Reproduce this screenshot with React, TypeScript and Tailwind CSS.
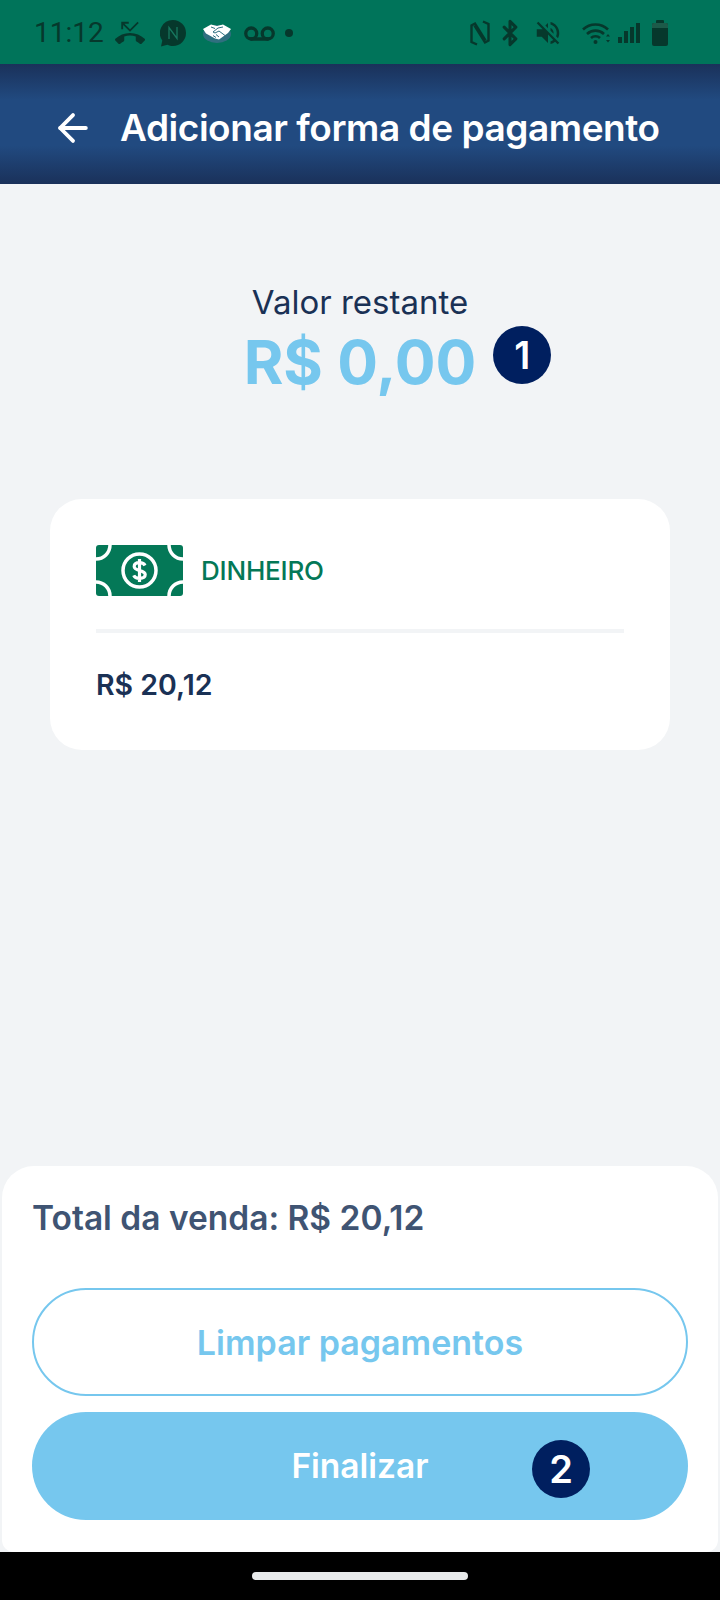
import { ArrowLeft, Bluetooth, Voicemail } from 'lucide-react';

const sans = 'font-["Inter",sans-serif]';

function PhoneMissedIcon() {
  return (
    <svg viewBox="0 0 24 24" className="h-[30px] w-[30px]" fill="#06382c">
      <path d="M6.5 5.5 12 11l7-7-1-1-6 6-4.5-4.5H11V3H5v6h1.5V5.5zm17.21 11.17C20.66 13.78 16.54 12 12 12 7.46 12 3.34 13.78.29 16.67c-.18.18-.29.43-.29.71s.11.53.29.71l2.48 2.48c.18.18.43.29.71.29.27 0 .52-.11.7-.28.79-.74 1.69-1.36 2.66-1.85.33-.16.56-.5.56-.9v-3.1c1.45-.48 3-.73 4.6-.73s3.15.25 4.6.72v3.1c0 .39.23.74.56.9.98.49 1.87 1.12 2.67 1.85.18.18.43.28.7.28.28 0 .53-.11.71-.29l2.48-2.48c.18-.18.29-.43.29-.71s-.11-.53-.29-.71z" />
    </svg>
  );
}

function ChatNIcon() {
  return (
    <svg viewBox="0 0 26 27" className="h-[27px] w-[26px]">
      <path d="M13 0a13 13 0 0 1 0 26c-2 0-4-.5-5.6-1.3L1 26.500l1.300-6A13 13 0 0 1 13 0z" fill="#06382c" />
      <path d="M9 19V7.500l8 11V7" fill="none" stroke="#17785f" strokeWidth="1.300" />
    </svg>
  );
}

function MercadoIcon() {
  return (
    <svg viewBox="0 0 28 20" className="h-[20px] w-[28px]">
      <ellipse cx="14" cy="11" rx="14" ry="9" fill="#2f6f7f" />
      <path d="M0 6 8 1.500l6 1.500 6-1.500L28 6l-3 4-9 6.500-4-1-9-5z" fill="#fff" />
      <path d="M8 4l4 1.500M20 4l-5 1-5 4 2 1 4-2 6 4.500M10 12.500l3 2M13 11.500l3 2.500" fill="none" stroke="#2f6f7f" strokeWidth="1" />
    </svg>
  );
}

function NfcIcon() {
  return (
    <svg viewBox="0 0 20 26" className="h-[26px] w-[20px]" fill="none" stroke="#06382c" strokeWidth="2.400">
      <path d="M7 24.500 1.500 22V5.500L5 3.500l10.500 17" />
      <path d="M13 1.500 18.500 4v16.500L15 22.500 4.500 5.500" />
    </svg>
  );
}

function MuteIcon() {
  return (
    <svg viewBox="0 0 24 24" className="h-[30px] w-[30px]" fill="#06382c">
      <path d="M16.5 12c0-1.770-1.020-3.290-2.500-4.030v2.210l2.450 2.450c.03-.2.05-.41.05-.63zm2.500 0c0 .94-.2 1.820-.54 2.640l1.510 1.510C20.630 14.910 21 13.500 21 12c0-4.280-2.990-7.860-7-8.770v2.060c2.890.86 5 3.540 5 6.710zM4.270 3 3 4.270 7.730 9H3v6h4l5 5v-6.730l4.250 4.250c-.67.52-1.420.93-2.250 1.180v2.060c1.380-.31 2.630-.95 3.690-1.810L19.730 21 21 19.730l-9-9L4.270 3zM12 4 9.910 6.090 12 8.180V4z" />
    </svg>
  );
}

function WifiIcon() {
  return (
    <svg viewBox="0 0 28 24" className="h-[24px] w-[28px]" fill="none" stroke="#06382c" strokeWidth="2.600">
      <path d="M1 8.500a18 18 0 0 1 25 0" />
      <path d="M5 13a12.500 12.500 0 0 1 17 0" />
      <path d="M9 17a6.500 6.500 0 0 1 9 0" />
      <circle cx="13.500" cy="21" r="2" fill="#06382c" stroke="none" />
      <path d="m24 15.500 2-2.500 2 2.500zM24 19l2 2.500 2-2.500z" fill="#06382c" stroke="none" />
    </svg>
  );
}

function SignalIcon() {
  return (
    <div className="flex h-5 items-end gap-[2px]">
      <div className="h-[6px] w-[4px] bg-[#06382c]" />
      <div className="h-[12px] w-[4px] bg-[#06382c]" />
      <div className="h-[16px] w-[4px] bg-[#06382c]" />
      <div className="h-[20px] w-[4px] bg-[#06382c]" />
    </div>
  );
}

function BatteryIcon() {
  return (
    <div className="flex flex-col items-center">
      <div className="h-[3px] w-[8px] rounded-t-[1px] bg-[#06382c]" />
      <div className="flex h-[23px] w-[16px] flex-col overflow-hidden rounded-[2px] bg-[#06382c]">
        <div className="h-[5px] bg-[#1d5a49]" />
      </div>
    </div>
  );
}

function MoneyIcon() {
  return (
    <svg viewBox="0 0 87 51" className="h-[51px] w-[87px]">
      <rect width="87" height="51" rx="3" fill="#047857" />
      <circle cx="0" cy="0" r="14" fill="none" stroke="#fff" strokeWidth="3.500" />
      <circle cx="87" cy="0" r="14" fill="none" stroke="#fff" strokeWidth="3.500" />
      <circle cx="0" cy="51" r="14" fill="none" stroke="#fff" strokeWidth="3.500" />
      <circle cx="87" cy="51" r="14" fill="none" stroke="#fff" strokeWidth="3.500" />
      <circle cx="43.500" cy="25.500" r="16.500" fill="none" stroke="#fff" strokeWidth="3.500" />
      <path d="M49 20.500c-.8-1.800-3-2.800-5.500-2.800-3.200 0-5.300 1.500-5.300 3.900 0 5.200 11 2.800 11 8 0 2.400-2.400 3.800-5.700 3.800-2.700 0-4.900-1-5.800-3M43.500 14v23" fill="none" stroke="#fff" strokeWidth="3.200" />
    </svg>
  );
}

function Badge({ n, className }: { n: number; className: string }) {
  return (
    <div
      className={`absolute flex h-[58px] w-[58px] items-center justify-center rounded-full bg-[#001f5f] text-[38px] font-semibold text-white ${className}`}
    >
      {n}
    </div>
  );
}

export default function App() {
  return (
    <div className={`flex h-[1600px] w-[720px] flex-col bg-[#f2f4f6] ${sans}`}>
      <div className="flex h-16 items-center bg-[#00745a] pt-[2px] pr-[52px] pl-[34px]">
        <span className='font-["Roboto",sans-serif] text-[28px] text-[#06382c]'>11:12</span>
        <div className="ml-[11px] flex items-center gap-[14px]">
          <PhoneMissedIcon />
          <div className="ml-[1px]"><ChatNIcon /></div>
          <div className="ml-[3px]"><MercadoIcon /></div>
          <Voicemail size={33} color="#06382c" strokeWidth={2.4} className="-ml-[2px]" />
        </div>
        <div className="ml-[9px] h-[8px] w-[8px] rounded-full bg-[#06382c]" />
        <div className="ml-auto flex items-center">
          <NfcIcon />
          <Bluetooth size={28} color="#06382c" strokeWidth={2.6} className="ml-[6px]" />
          <div className="ml-[9px]"><MuteIcon /></div>
          <div className="ml-[19px]"><WifiIcon /></div>
          <div className="ml-[8px]"><SignalIcon /></div>
          <div className="ml-[12px]"><BatteryIcon /></div>
        </div>
      </div>

      <div className="flex h-[120px] items-center bg-[linear-gradient(180deg,#1a315a_0%,#214a80_30%,#214a80_68%,#1a315a_100%)] pt-[7px] pl-[51px]">
        <ArrowLeft size={44} color="#fff" strokeWidth={2.1} />
        <h1 className="ml-[25px] text-[37px] font-semibold tracking-[-0.45px] text-white">Adicionar forma de pagamento</h1>
      </div>

      <div className="flex flex-1 flex-col items-center px-[50px] pt-[99px]">
        <p className="text-[33px] leading-[38px] text-[#1a3155]">Valor restante</p>
        <div className="relative mt-[5px]">
          <p className="text-[60.5px] leading-[72px] font-bold text-[#76c7ee]">R$ 0,00</p>
          <Badge n={1} className="top-0 -right-[75px]" />
        </div>

        <div className="mt-[101px] h-[251px] w-full rounded-[32px] bg-white px-[46px] pt-[46px]">
          <div className="flex items-center">
            <MoneyIcon />
            <span className="ml-[18px] text-[26px] font-medium tracking-[-0.2px] text-[#047857]">DINHEIRO</span>
          </div>
          <div className="mt-[33px] h-[4px] bg-[#f2f4f6]" />
          <p className="mt-[31px] text-[28.5px] font-semibold text-[#1a3155]">R$ 20,12</p>
        </div>
      </div>

      <div className="mx-[2px] h-[386px] rounded-t-[32px] rounded-b-[12px] bg-white px-[30px] pt-[30px]">
        <p className="text-[33.5px] leading-[44px] font-semibold text-[#3f5473]">Total da venda: R$ 20,12</p>
        <div className="mt-[48px] flex h-[108px] items-center justify-center rounded-full border-2 border-[#76c7ee] text-[34px] font-semibold text-[#76c7ee]">
          Limpar pagamentos
        </div>
        <div className="relative mt-[16px] flex h-[108px] items-center justify-center rounded-full bg-[#76c7ee] text-[33.5px] font-semibold text-white">
          Finalizar
          <Badge n={2} className="top-[28px] left-[500px]" />
        </div>
      </div>

      <div className="flex h-12 items-start justify-center bg-black pt-[20px]">
        <div className="h-[8px] w-[216px] rounded-full bg-[#e8eaeb]" />
      </div>
    </div>
  );
}
